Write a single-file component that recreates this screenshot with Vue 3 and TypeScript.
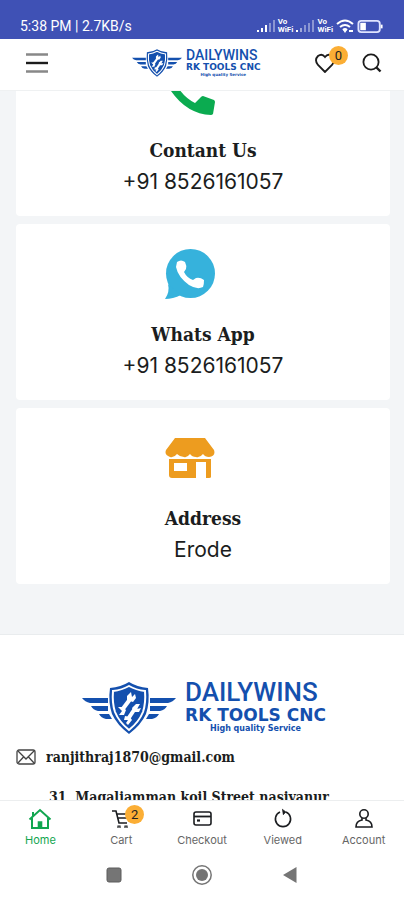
<script setup lang="ts">
import { onMounted, ref } from 'vue'

interface ContactCard {
  icon: 'phone' | 'whatsapp' | 'store'
  title: string
  value: string
}

interface Tab {
  icon: 'home' | 'cart' | 'checkout' | 'viewed' | 'account'
  label: string
  badge?: number
}

const cards: ContactCard[] = [
  { icon: 'phone', title: 'Contant Us', value: '+91 8526161057' },
  { icon: 'whatsapp', title: 'Whats App', value: '+91 8526161057' },
  { icon: 'store', title: 'Address', value: 'Erode' },
]

const tabs: Tab[] = [
  { icon: 'home', label: 'Home' },
  { icon: 'cart', label: 'Cart', badge: 2 },
  { icon: 'checkout', label: 'Checkout' },
  { icon: 'viewed', label: 'Viewed' },
  { icon: 'account', label: 'Account' },
]

const activeTab = ref('Home')
const wishlistCount = ref(0)
const scroller = ref<HTMLElement | null>(null)

// Opens with the first card partly scrolled beneath the header.
onMounted(() => {
  if (scroller.value) scroller.value.scrollTop = 67
})
</script>

<template>
  <div class="screen">
    <svg class="defs" aria-hidden="true">
      <symbol id="emblem" viewBox="0 0 94 52">
        <g fill="#1450ae">
          <path d="M0 16H26V21H8Q3 20 0 16ZM9 24H26V29H16Q11 28 9 24ZM17 32H27L30 37H24Q19 36 17 32Z" />
          <path d="M94 16H68V21H86Q91 20 94 16ZM85 24H68V29H78Q83 28 85 24ZM77 32H67L64 37H70Q75 36 77 32Z" />
          <path d="M47 0Q55 5 66 6Q68 20 64 32Q59 43 47 52Q35 43 30 32Q26 20 28 6Q39 5 47 0Z" />
        </g>
        <path d="M47 4Q54 8 63 9Q64 21 61 30Q57 40 47 48Q37 40 33 30Q30 21 31 9Q40 8 47 4Z" fill="none" stroke="#fff" stroke-width="2" />
        <g fill="none" stroke="#fff" stroke-width="4">
          <path d="M49 16L40 28" />
          <path d="M54 25L46 37" />
        </g>
        <path d="M49 10L45 14V18L51 20L54 16L53 12L50 15ZM36 25L41 25L44 28L42 33L37 33L40 29ZM58 22L54 22L50 26L52 30L57 30L59 26L55 27ZM43 34L48 35L50 38L46 43L44 41L46 38L42 38Z" fill="#fff" />
      </symbol>
    </svg>

    <div class="status">
      <span class="clock">5:38 PM | 2.7KB/s</span>
      <div class="status-icons">
        <template v-for="n in 2" :key="n">
          <svg width="18" height="12" viewBox="0 0 18 12" fill="#fff" aria-hidden="true">
            <rect x="0" y="10" width="2" height="2" />
            <rect x="4" y="8" width="2" height="4" :opacity="n === 1 ? 1 : 0.5" />
            <rect x="8" y="5" width="2" height="7" :opacity="n === 1 ? 1 : 0.4" />
            <rect x="12" y="3" width="2" height="9" opacity="0.4" />
            <rect x="16" y="0" width="2" height="12" opacity="0.4" />
          </svg>
          <span class="vowifi">Vo<br />WiFi</span>
        </template>
        <svg width="18" height="14" viewBox="0 0 18 14" fill="none" stroke="#fff" stroke-width="2" aria-hidden="true">
          <path d="M1 5Q9 -2 17 5M4 8Q9 4 14 8M7 11Q9 9 11 11" />
          <path d="M9 14L7 11H11Z" fill="#fff" stroke="none" />
          <path d="M13 12H17" />
        </svg>
        <svg width="27" height="13" viewBox="0 0 28 14" aria-hidden="true">
          <rect x="1" y="1" width="23" height="12" rx="3" fill="none" stroke="#dfe3ff" stroke-width="2" />
          <rect x="3" y="3" width="6" height="8" fill="#fff" />
          <rect x="25" y="5" width="2" height="4" fill="#fff" />
        </svg>
      </div>
    </div>

    <header class="header">
      <button class="icon-button" type="button" aria-label="Menu">
        <svg width="22" height="20" viewBox="0 0 22 20" aria-hidden="true">
          <path d="M0 1.500H22M0 18.500H22" stroke="#888" stroke-width="2.400" />
          <path d="M0 10H22" stroke="#1c1c1c" stroke-width="2.400" />
        </svg>
      </button>
      <a class="logo small" href="#">
        <svg class="emblem"><use href="#emblem" /></svg>
        <span class="wordmark">
          <span class="brand">DAILYWINS</span>
          <span class="sub">RK TOOLS CNC</span>
          <span class="motto">High quality Service</span>
        </span>
      </a>
      <div class="actions">
        <button class="icon-button" type="button" aria-label="Wishlist">
          <svg width="20" height="20" viewBox="0 0 20 20" fill="none" stroke="#1c1c1c" stroke-width="1.800" aria-hidden="true">
            <path d="M10 19L3 12Q-1 7 3 3Q7 0 10 4Q13 0 17 3Q21 7 17 12Z" />
          </svg>
          <span class="badge">{{ wishlistCount }}</span>
        </button>
        <button class="icon-button" type="button" aria-label="Search">
          <svg width="20" height="20" viewBox="0 0 20 20" fill="none" stroke="#1c1c1c" stroke-width="1.800" aria-hidden="true">
            <circle cx="9" cy="9" r="7.600" />
            <path d="M14.500 14.500L18.500 18.500" stroke-width="2.400" />
          </svg>
        </button>
      </div>
    </header>

    <main ref="scroller" class="scroller">
      <section class="cards">
        <article v-for="card in cards" :key="card.title" class="card">
          <svg v-if="card.icon === 'phone'" class="card-icon" viewBox="0 0 50 50" fill="#0bab50" aria-hidden="true">
            <path d="M2 2L14 0L17 13L11 19Q18 32 30 38L36 32Q37 31 38 31L49 35Q50 36 50 37L48 49Q47 50 46 50Q22 49 6 26Q0 17 0 4Q0 2 2 2Z" />
          </svg>
          <svg v-else-if="card.icon === 'whatsapp'" class="card-icon" viewBox="0 0 50 50" aria-hidden="true">
            <circle cx="25.500" cy="24.500" r="24.500" fill="#36b2dc" />
            <path d="M3 35Q5 43 0 50Q8 50 16 46Z" fill="#36b2dc" />
            <path d="M12 13Q16 10 20 13Q22 17 21 20L19 23Q22 29 28 31L31 29Q35 28 39 31Q39 36 38 38Q32 41 24 36Q13 28 11 18Z" fill="#fff" />
          </svg>
          <svg v-else class="card-icon" viewBox="0 0 50 50" aria-hidden="true">
            <path d="M10 5H40L49 17Q51 23 44 24Q40 24 38 21Q35 25 31 24Q27 24 25 21Q22 25 19 24Q15 24 12 21Q9 25 5 24Q-1 22 1 17Z" fill="#ed9c1f" />
            <path fill-rule="evenodd" d="M4 26H46V44Q46 45 44 45H41V29H31V45H7Q4 45 4 42ZM9 30V38H22V30Z" fill="#ed9c1f" />
          </svg>
          <h2>{{ card.title }}</h2>
          <p>{{ card.value }}</p>
        </article>
      </section>

      <footer class="footer">
        <div class="logo large">
          <svg class="emblem"><use href="#emblem" /></svg>
          <span class="wordmark">
            <span class="brand">DAILYWINS</span>
            <span class="sub">RK TOOLS CNC</span>
            <span class="motto">High quality Service</span>
          </span>
        </div>
        <a class="email" href="mailto:ranjithraj1870@gmail.com">
          <svg width="20" height="16" viewBox="0 0 20 16" fill="none" stroke="#444" stroke-width="1.300" aria-hidden="true">
            <rect x="1" y="1" width="18" height="14" rx="2" />
            <path d="M2 2L10 10L18 2M2 14L7.500 8M18 14L12.500 8" />
          </svg>
          ranjithraj1870@gmail.com
        </a>
        <address>31, Magaliamman koil Street nasiyanur</address>
      </footer>
    </main>

    <nav class="tabs" aria-label="Main">
      <a v-for="tab in tabs" :key="tab.label" href="#" class="tab" :class="{ active: tab.label === activeTab }" @click.prevent="activeTab = tab.label">
        <span class="tab-icon">
          <svg width="24" height="22" viewBox="0 0 24 22" fill="none" stroke="currentColor" stroke-width="1.600" aria-hidden="true">
            <template v-if="tab.icon === 'home'">
              <path d="M1.500 11.500L12 2L22.500 11.500M4 10V20H20V10M5 8V4" stroke-width="2" />
              <path d="M10.500 20V14H13.500V20Z" fill="currentColor" />
            </template>
            <template v-else-if="tab.icon === 'cart'">
              <path d="M3 3H7L10 15H18M8 6H19M9 10H18" />
              <path d="M9 20V18H11V20M16 20V18H18V20" stroke-width="1.200" />
            </template>
            <template v-else-if="tab.icon === 'checkout'">
              <rect x="4" y="4" width="17" height="13" rx="2" />
              <path d="M4 8.500H21" stroke-width="1.800" />
              <path d="M7 12.500H10" stroke-width="2.200" />
            </template>
            <template v-else-if="tab.icon === 'viewed'">
              <path d="M9 4A7.600 7.600 0 1 0 15 4" />
              <path d="M11 1L15 4L12 7" fill="currentColor" stroke-width="0.600" />
            </template>
            <template v-else>
              <circle cx="12" cy="6" r="4.200" />
              <path d="M10 10V12Q4 13 4 19H20Q20 13 14 12V10" />
            </template>
          </svg>
          <span v-if="tab.badge" class="badge">{{ tab.badge }}</span>
        </span>
        <span class="tab-label">{{ tab.label }}</span>
      </a>
    </nav>

    <div class="system">
      <button type="button" aria-label="Recent apps">
        <svg width="20" height="20" viewBox="0 0 20 20" aria-hidden="true"><rect x="3" y="3" width="14" height="14" rx="2" fill="#757575" stroke="#5c5c5c" /></svg>
      </button>
      <button type="button" aria-label="Home screen">
        <svg width="20" height="20" viewBox="0 0 20 20" aria-hidden="true"><circle cx="10" cy="10" r="9.200" fill="none" stroke="#757575" stroke-width="1.500" /><circle cx="10" cy="10" r="6" fill="#757575" /></svg>
      </button>
      <button type="button" aria-label="Back">
        <svg width="20" height="20" viewBox="0 0 20 20" aria-hidden="true"><path d="M3 10L16.500 2V18Z" fill="#757575" /></svg>
      </button>
    </div>
  </div>
</template>

<style>
body {
  margin: 0;
}
</style>

<style scoped>
.screen {
  display: flex;
  flex-direction: column;
  height: 100vh;
  background: #fff;
  color: #1b1d20;
  font-family: Roboto, "Liberation Sans", sans-serif;
}
.defs {
  position: absolute;
  width: 0;
  height: 0;
}
button {
  display: grid;
  place-items: center;
  padding: 0;
  border: 0;
  background: none;
  color: inherit;
  font: inherit;
}
a {
  color: inherit;
  text-decoration: none;
}
svg {
  display: block;
}
.status {
  display: flex;
  align-items: flex-end;
  justify-content: space-between;
  box-sizing: border-box;
  height: 39px;
  padding: 0 20px 4px;
  background: #3f51b5;
  color: #fff;
  line-height: 18px;
}
.clock {
  font-size: 14px;
}
.status-icons {
  display: flex;
  align-items: center;
  gap: 3px;
  height: 18px;
}
.vowifi {
  font-size: 8px;
  font-weight: 700;
  line-height: 8px;
}
.header {
  display: grid;
  grid-template-columns: 106px 1fr auto;
  align-items: center;
  box-sizing: border-box;
  height: 52px;
  padding: 0 22px 4px 26px;
  border-bottom: 1px solid #eff1f2;
}
.actions {
  display: flex;
  justify-content: flex-end;
  gap: 27px;
}
.icon-button {
  position: relative;
  justify-self: start;
}
.badge {
  position: absolute;
  top: -7px;
  left: 14px;
  width: 19px;
  height: 19px;
  border-radius: 50%;
  background: #fbae35;
  color: #222;
  font-size: 13px;
  line-height: 19px;
  text-align: center;
}
.logo {
  display: flex;
  align-items: center;
  justify-content: center;
  color: #1450ae;
}
.wordmark {
  display: flex;
  flex-direction: column;
  font-family: "DejaVu Sans", sans-serif;
  font-weight: 700;
}
.brand {
  font-family: Roboto, sans-serif;
  font-weight: 500;
}
.motto {
  text-align: center;
}
.small {
  justify-content: flex-start;
  gap: 4px;
}
.small .emblem {
  width: 50px;
  height: 28px;
}
.small .brand {
  font-size: 14px;
  line-height: 14px;
}
.small .sub {
  font-size: 9px;
  line-height: 10px;
}
.small .motto {
  font-size: 4px;
  line-height: 5px;
}
.large {
  gap: 9px;
  padding-left: 4px;
}
.large .emblem {
  width: 94px;
  height: 52px;
}
.large .wordmark {
  padding-bottom: 4px;
}
.large .brand {
  font-size: 26px;
  line-height: 26px;
}
.large .sub {
  font-size: 17px;
  line-height: 20px;
}
.large .motto {
  font-size: 8px;
  line-height: 8px;
}
.scroller {
  flex: 1;
  min-height: 0;
  overflow-y: auto;
  scrollbar-width: none;
}
.cards {
  display: flex;
  flex-direction: column;
  gap: 8px;
  padding: 16px 14px 50px 16px;
  background: #f3f5f7;
}
.card {
  display: flex;
  flex-direction: column;
  align-items: center;
  padding: 25px 0 18px;
  border-radius: 4px;
  background: #fff;
}
.card-icon {
  width: 50px;
  height: 50px;
  margin: 0 26px 20px 0;
}
h2 {
  margin: 0;
  font-family: "Roboto Slab", "DejaVu Serif Condensed", "DejaVu Serif", serif;
  font-size: 19px;
  font-weight: 700;
  line-height: 30px;
}
p {
  margin: 0;
  font-family: Inter, sans-serif;
  font-size: 21px;
  line-height: 33px;
}
.footer {
  padding: 44px 16px 60px;
  border-top: 1px solid #e9ecee;
  font-family: "Roboto Slab", "DejaVu Serif Condensed", "DejaVu Serif", serif;
  font-size: 14px;
  font-weight: 700;
}
.email {
  display: flex;
  align-items: center;
  gap: 10px;
  margin-top: 10px;
  line-height: 20px;
}
address {
  margin-top: 20px;
  padding-left: 33px;
  font-style: normal;
  line-height: 20px;
}
.tabs {
  display: grid;
  grid-template-columns: repeat(5, 1fr);
  box-sizing: border-box;
  height: 50px;
  padding-top: 7px;
  border-top: 1px solid #eceeef;
  background: #fff;
}
.tab {
  display: flex;
  flex-direction: column;
  align-items: center;
}
.tab-icon {
  position: relative;
}
.tab-icon .badge {
  top: -3px;
  left: 16px;
}
.tab-label {
  color: #666;
  font-family: Inter, sans-serif;
  font-size: 11px;
  line-height: 20px;
}
.active,
.active .tab-label {
  color: #12a650;
}
.system {
  display: flex;
  align-items: center;
  justify-content: center;
  gap: 68px;
  height: 50px;
}
</style>
